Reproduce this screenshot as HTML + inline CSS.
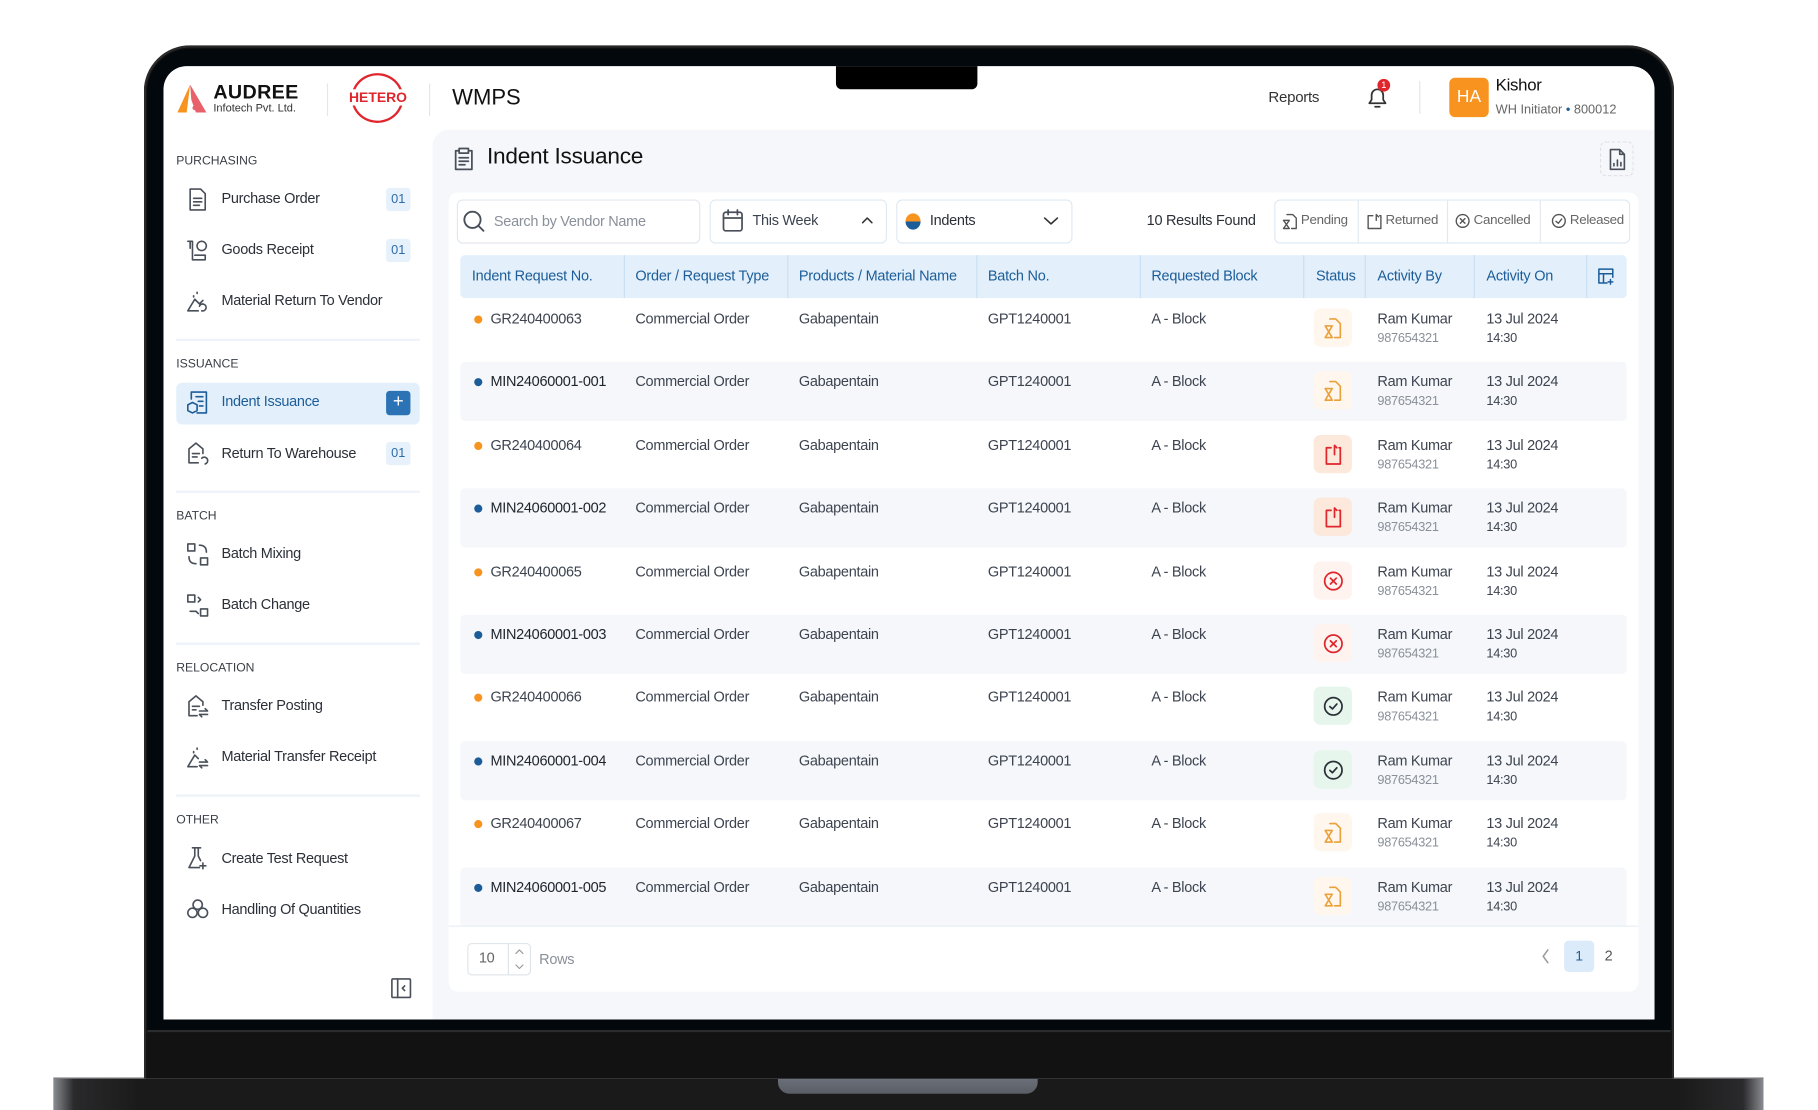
<!DOCTYPE html>
<html><head><meta charset="utf-8">
<style>
*{box-sizing:border-box;margin:0;padding:0}
html,body{width:1818px;height:1110px;overflow:hidden;background:#fff;font-family:"Liberation Sans",sans-serif}
#w{position:absolute;left:0;top:0;width:1568px;height:957px;transform:scale(1.15944,1.15987);transform-origin:0 0}
.a{position:absolute}
.t{position:absolute;white-space:nowrap;font-size:12.5px;letter-spacing:-0.25px;color:#3d4450}
svg{position:absolute;fill:none;stroke-linecap:round;stroke-linejoin:round}
.sh{font-size:10.5px;color:#3a3f47;letter-spacing:0}
.si{font-size:12.5px;color:#2b3038}
.badge{position:absolute;left:333px;width:21px;height:20px;background:#e6f1fb;border-radius:3px;font-size:11px;color:#2d6ca8;text-align:center;line-height:20px}
.div{position:absolute;left:152px;width:210px;height:2px;background:#edf3f9}
.hd{font-size:12.5px;color:#1c5d99;letter-spacing:-0.2px}
.row{position:absolute;left:397px;width:1006px;height:51px;border-radius:4px}
.row.s{background:#f5f7fa}
.dot{position:absolute;width:7px;height:7px;border-radius:50%;left:12px;top:14px}
.st{position:absolute;left:736px;top:8px;width:33px;height:33px;border-radius:6px}
</style></head><body>
<div id="w">
<!-- base -->
<div class="a" style="left:46px;top:929px;width:1475px;height:28px;background:linear-gradient(90deg,#8a8d92 0,#2a2a2c 1.2%,#1a1a1a 5%,#1a1a1a 95%,#2a2a2c 98.8%,#8a8d92 100%);border-top:1px solid #6a6a6e"></div>
<div class="a" style="left:671px;top:929px;width:224px;height:14px;background:linear-gradient(#6b707a,#5a5e66);border-radius:0 0 10px 10px"></div>
<!-- bezel -->
<div class="a" style="left:124px;top:39px;width:1320px;height:891px;background:#121212;border-radius:40px 40px 0 0;border:2px solid #2a2a2a;border-bottom:none"></div>
<div class="a" style="left:127px;top:42px;width:1314px;height:848px;background:#03080d;border-radius:37px 37px 0 0;border-bottom:2px solid #2a2c2e"></div>
<!-- screen -->
<div class="a" style="left:141px;top:57px;width:1286px;height:822px;background:#fff;border-radius:20px 20px 0 0;overflow:hidden">
</div>
<div class="a" style="left:373px;top:112px;width:1054px;height:767px;background:#f5f7fa;border-radius:14px 0 0 0"></div>
<div class="a" style="left:721px;top:57px;width:122px;height:20px;background:#000;border-radius:0 0 5px 5px"></div>

<!-- header -->
<svg style="left:152px;top:72px" width="28" height="26" viewBox="0 0 28 26"><path d="M12 1 L1 25 H9 Z" fill="#f7931e" stroke="none"/><path d="M12 1 L26 25 H17 L13 14 Z" fill="#e8606a" stroke="none"/><circle cx="16" cy="21" r="2" fill="#e8606a" stroke="none"/></svg>
<div class="t" style="left:184px;top:70px;font-size:17px;font-weight:bold;color:#111;letter-spacing:0.3px">AUDREE</div>
<div class="t" style="left:184px;top:88px;font-size:9.5px;color:#333;letter-spacing:0">Infotech Pvt. Ltd.</div>
<div class="a" style="left:282px;top:72px;width:1px;height:28px;background:#e6e6e6"></div>
<div class="a" style="left:303px;top:63px;width:45px;height:43px;border:2px solid #e0262d;border-radius:50%"></div>
<div class="t" style="left:300px;top:77px;font-size:12px;font-weight:bold;color:#e0262d;background:#fff;letter-spacing:0;padding:0 1px">HETERO</div>
<div class="a" style="left:370px;top:72px;width:1px;height:28px;background:#e6e6e6"></div>
<div class="t" style="left:390px;top:74px;font-size:19px;color:#111;letter-spacing:0">WMPS</div>
<div class="t" style="left:1094px;top:76px;font-size:13px;color:#333">Reports</div>
<svg style="left:1178px;top:73px" width="20" height="22" viewBox="0 0 20 22" stroke="#333" stroke-width="1.5"><path d="M3 16 H17 L15 13 V9 A5 5 0 0 0 5 9 V13 Z M8 19 H12"/></svg>
<div class="a" style="left:1188px;top:68px;width:11px;height:11px;border-radius:50%;background:#e0262d;color:#fff;font-size:8px;text-align:center;line-height:11px">1</div>
<div class="a" style="left:1224px;top:70px;width:1px;height:28px;background:#e6e6e6"></div>
<div class="a" style="left:1250px;top:67px;width:34px;height:34px;border-radius:5px;background:#f7931e;color:#fff;font-size:15px;text-align:center;line-height:34px">HA</div>
<div class="t" style="left:1290px;top:66px;font-size:14.5px;color:#111">Kishor</div>
<div class="t" style="left:1290px;top:89px;font-size:11px;color:#666;letter-spacing:0">WH Initiator <span style="color:#1c5d99">•</span> 800012</div>

<!-- sidebar -->
<div class="t sh" style="left:152px;top:133px">PURCHASING</div>
<div class="t sh" style="left:152px;top:308px">ISSUANCE</div>
<div class="t sh" style="left:152px;top:439px">BATCH</div>
<div class="t sh" style="left:152px;top:570px">RELOCATION</div>
<div class="t sh" style="left:152px;top:701px">OTHER</div>
<div class="div" style="top:292px"></div><div class="div" style="top:423px"></div><div class="div" style="top:554px"></div><div class="div" style="top:685px"></div>
<div class="a" style="left:152px;top:330px;width:210px;height:36px;background:#e3f0fb;border-radius:5px"></div>
<svg style="left:161px;top:162px" width="19" height="20" viewBox="0 0 19 20" stroke="#4a505a" stroke-width="1.4"><path d="M3 1 H12 L16 5 V19 H3 Z M6 9 H13 M6 12 H13 M6 15 H11"/></svg>
<div class="t si" style="left:191px;top:164px">Purchase Order</div><div class="badge" style="top:162px">01</div>
<svg style="left:161px;top:206px" width="19" height="20" viewBox="0 0 19 20" stroke="#4a505a" stroke-width="1.4"><path d="M1 2 H5 V18 H16 M3 2 V8 M13 2 A4 4 0 1 1 12.9 2 M7 14 H16 V18"/></svg>
<div class="t si" style="left:191px;top:208px">Goods Receipt</div><div class="badge" style="top:206px">01</div>
<svg style="left:161px;top:250px" width="19" height="20" viewBox="0 0 19 20" stroke="#4a505a" stroke-width="1.4"><path d="M1 18 L7 8 L11 12 L14 9 M1 18 H10 M13 18 A3 3 0 1 0 11 14 M9 2 V3 M6 5 V6"/></svg>
<div class="t si" style="left:191px;top:252px">Material Return To Vendor</div>
<svg style="left:161px;top:337px" width="19" height="20" viewBox="0 0 19 20" stroke="#1c5d99" stroke-width="1.4"><path d="M4 7 V1 H17 V19 H9 M8 5 H14 M10 9 H14 M11 13 H14 M1 12 L5 10 L9 12 V17 L5 19 L1 17 Z"/></svg>
<div class="t si" style="left:191px;top:339px;color:#1c5d99">Indent Issuance</div>
<div class="a" style="left:333px;top:337px;width:21px;height:21px;background:#2b73b4;border-radius:3px;color:#fff;text-align:center;line-height:20px;font-size:16px">+</div>
<svg style="left:161px;top:381px" width="19" height="20" viewBox="0 0 19 20" stroke="#4a505a" stroke-width="1.4"><path d="M10 18 H2 V6 L8 1 L14 6 V10 M5 10 H11 M5 13 H9 M16 19 A3 3 0 1 0 13 14"/></svg>
<div class="t si" style="left:191px;top:384px">Return To Warehouse</div><div class="badge" style="top:381px">01</div>
<svg style="left:161px;top:468px" width="19" height="20" viewBox="0 0 19 20" stroke="#4a505a" stroke-width="1.4"><path d="M1 1 H7 V7 H1 Z M12 13 H18 V19 H12 Z M11 2 Q17 2 17 8 M8 18 Q2 18 2 12"/></svg>
<div class="t si" style="left:191px;top:470px">Batch Mixing</div>
<svg style="left:161px;top:512px" width="19" height="20" viewBox="0 0 19 20" stroke="#4a505a" stroke-width="1.4"><path d="M1 1 H7 V7 H1 Z M12 13 H18 V19 H12 Z M10 3 L12 5 M10 17 L8 15 M12 5 L10 7 M3 15 H8"/></svg>
<div class="t si" style="left:191px;top:514px">Batch Change</div>
<svg style="left:161px;top:599px" width="19" height="20" viewBox="0 0 19 20" stroke="#4a505a" stroke-width="1.4"><path d="M9 18 H2 V6 L8 1 L14 6 V9 M5 10 H11 M5 13 H8 M11 14 H18 L16 12 M18 17 H11 L13 19"/></svg>
<div class="t si" style="left:191px;top:601px">Transfer Posting</div>
<svg style="left:161px;top:643px" width="19" height="20" viewBox="0 0 19 20" stroke="#4a505a" stroke-width="1.4"><path d="M1 18 L7 8 L10 11 M1 18 H9 M11 14 H18 L16 12 M18 17 H11 L13 19 M9 2 V3 M6 5 V6"/></svg>
<div class="t si" style="left:191px;top:645px">Material Transfer Receipt</div>
<svg style="left:161px;top:730px" width="19" height="20" viewBox="0 0 19 20" stroke="#4a505a" stroke-width="1.4"><path d="M5 1 H12 M7 1 V8 L2 18 H11 M10 1 V8 L12 12 M14 14 V19 M11.5 16.5 H16.5"/></svg>
<div class="t si" style="left:191px;top:733px">Create Test Request</div>
<svg style="left:161px;top:774px" width="19" height="20" viewBox="0 0 19 20" stroke="#4a505a" stroke-width="1.4"><circle cx="9.5" cy="6" r="4"/><circle cx="5" cy="13" r="4"/><circle cx="14" cy="13" r="4"/></svg>
<div class="t si" style="left:191px;top:777px">Handling Of Quantities</div>
<svg style="left:337px;top:843px" width="18" height="18" viewBox="0 0 18 18" stroke="#4a505a" stroke-width="1.4"><rect x="1" y="1" width="16" height="16" rx="1"/><path d="M6 1 V17 M12 7 L10 9 L12 11"/></svg>

<!-- title -->
<svg style="left:391px;top:127px" width="18" height="20" viewBox="0 0 18 20" stroke="#4a505a" stroke-width="1.5"><path d="M5 3 H2 V19 H16 V3 H13 M5 1 H13 V5 H5 Z M5 9 H13 M5 12 H13 M5 15 H10"/></svg>
<div class="t" style="left:420px;top:124px;font-size:19.5px;color:#111;letter-spacing:-0.2px">Indent Issuance</div>
<div class="a" style="left:1380px;top:122px;width:29px;height:30px;border:1px dashed #dde2e8;border-radius:5px"></div>
<svg style="left:1386px;top:128px" width="18" height="19" viewBox="0 0 18 19" stroke="#4a505a" stroke-width="1.4"><path d="M3 1 H11 L15 5 V18 H3 Z M11 1 V5 H15 M6 15 V13 M9 15 V10 M12 15 V12"/></svg>

<!-- card -->
<div class="a" style="left:387px;top:166px;width:1026px;height:689px;background:#fff;border-radius:8px"></div>
<div class="a" style="left:394px;top:172px;width:210px;height:38px;border:1px solid #e3e8ee;border-radius:5px"></div>
<svg style="left:399px;top:181px" width="20" height="20" viewBox="0 0 20 20" stroke="#4a505a" stroke-width="1.6"><circle cx="8.5" cy="8.5" r="7"/><path d="M13.5 13.5 L18 18"/></svg>
<div class="t" style="left:426px;top:184px;color:#8a9099">Search by Vendor Name</div>
<div class="a" style="left:612px;top:172px;width:153px;height:38px;border:1px solid #dfe9f3;border-radius:5px"></div>
<svg style="left:623px;top:180px" width="18" height="20" viewBox="0 0 18 20" stroke="#4a505a" stroke-width="1.5"><rect x="1" y="3" width="16" height="16" rx="2"/><path d="M1 8 H17 M5 1 V5 M13 1 V5"/></svg>
<div class="t" style="left:649px;top:183px;color:#3d4450">This Week</div>
<svg style="left:743px;top:186px" width="10" height="8" viewBox="0 0 10 8" stroke="#333" stroke-width="1.3"><path d="M1 6 L5 2 L9 6"/></svg>
<div class="a" style="left:773px;top:172px;width:152px;height:38px;border:1px solid #dfe9f3;border-radius:5px"></div>
<div class="a" style="left:781px;top:184px;width:13px;height:14px;border-radius:50%;background:linear-gradient(#f7931e 50%,#1c5d99 50%)"></div>
<div class="t" style="left:802px;top:183px;color:#2b3038">Indents</div>
<svg style="left:900px;top:186px" width="13" height="9" viewBox="0 0 13 9" stroke="#333" stroke-width="1.4"><path d="M1 2 L6.5 7 L12 2"/></svg>
<div class="t" style="left:989px;top:183px;color:#2b3038">10 Results Found</div>
<div class="a" style="left:1099px;top:172px;width:307px;height:38px;border:1px solid #dfe9f3;border-radius:5px"></div>
<div class="a" style="left:1171px;top:173px;width:1px;height:36px;background:#e3e8ee"></div>
<div class="a" style="left:1248px;top:173px;width:1px;height:36px;background:#e3e8ee"></div>
<div class="a" style="left:1328px;top:173px;width:1px;height:36px;background:#e3e8ee"></div>
<svg style="left:1106px;top:184px" width="13" height="14" viewBox="0 0 13 14" stroke="#555" stroke-width="1.2"><path d="M4 1 H9 L12 4 V13 H8 M1 6 H6 L1 13 H6 Z"/></svg>
<div class="t" style="left:1122px;top:184px;font-size:11.5px;color:#666">Pending</div>
<svg style="left:1179px;top:184px" width="13" height="14" viewBox="0 0 13 14" stroke="#555" stroke-width="1.2"><path d="M5 2 H1 V13 H12 V2 H11 M8 6 V1 L10 3"/></svg>
<div class="t" style="left:1195px;top:184px;font-size:11.5px;color:#666">Returned</div>
<svg style="left:1255px;top:184px" width="13" height="13" viewBox="0 0 13 13" stroke="#555" stroke-width="1.2"><circle cx="6.5" cy="6.5" r="5.5"/><path d="M4.5 4.5 L8.5 8.5 M8.5 4.5 L4.5 8.5"/></svg>
<div class="t" style="left:1271px;top:184px;font-size:11.5px;color:#666">Cancelled</div>
<svg style="left:1338px;top:184px" width="13" height="13" viewBox="0 0 13 13" stroke="#555" stroke-width="1.2"><circle cx="6.5" cy="6.5" r="5.5"/><path d="M4 6.8 L6 8.5 L9 4.8"/></svg>
<div class="t" style="left:1354px;top:184px;font-size:11.5px;color:#666">Released</div>

<!-- table head -->
<div class="a" style="left:397px;top:220px;width:1006px;height:37px;background:#e3f0fb;border-radius:4px"></div>
<div class="a" style="left:538px;top:220px;width:1px;height:37px;background:#c9dff2"></div>
<div class="a" style="left:679px;top:220px;width:1px;height:37px;background:#c9dff2"></div>
<div class="a" style="left:842px;top:220px;width:1px;height:37px;background:#c9dff2"></div>
<div class="a" style="left:983px;top:220px;width:1px;height:37px;background:#c9dff2"></div>
<div class="a" style="left:1124px;top:220px;width:1px;height:37px;background:#c9dff2"></div>
<div class="a" style="left:1177px;top:220px;width:1px;height:37px;background:#c9dff2"></div>
<div class="a" style="left:1271px;top:220px;width:1px;height:37px;background:#c9dff2"></div>
<div class="a" style="left:1368px;top:220px;width:1px;height:37px;background:#c9dff2"></div>
<div class="t hd" style="left:407px;top:231px">Indent Request No.</div>
<div class="t hd" style="left:548px;top:231px">Order / Request Type</div>
<div class="t hd" style="left:689px;top:231px">Products / Material Name</div>
<div class="t hd" style="left:852px;top:231px">Batch No.</div>
<div class="t hd" style="left:993px;top:231px">Requested Block</div>
<div class="t hd" style="left:1135px;top:231px">Status</div>
<div class="t hd" style="left:1188px;top:231px">Activity By</div>
<div class="t hd" style="left:1282px;top:231px">Activity On</div>
<svg style="left:1378px;top:231px" width="14" height="15" viewBox="0 0 14 15" stroke="#1c5d99" stroke-width="1.3"><path d="M8 13 H1 V1 H13 V8 M1 5 H13 M5 5 V13 M11 10 V14 M9 12 H13"/></svg>

<!-- rows -->
<div id="rows"></div>
<div class="row" style="top:258px"><div class="dot" style="background:#f7931e"></div><div class="t" style="left:26px;top:10px">GR240400063</div><div class="t" style="left:151px;top:10px">Commercial Order</div><div class="t" style="left:292px;top:10px">Gabapentain</div><div class="t" style="left:455px;top:10px">GPT1240001</div><div class="t" style="left:596px;top:10px">A - Block</div><div class="st" style="background:#fff6ee"><svg style="left:9px;top:8px" width="16" height="18" viewBox="0 0 16 18" stroke="#e9a13b" stroke-width="1.4"><path d="M5 1 H10 L14 5 V17 H9 M1 7 H7 L1 17 H7 Z"/></svg></div><div class="t" style="left:791px;top:10px">Ram Kumar</div><div class="t" style="left:791px;top:28px;font-size:11px;color:#8a9099">987654321</div><div class="t" style="left:885px;top:10px">13 Jul 2024</div><div class="t" style="left:885px;top:28px;font-size:11px;color:#3d4450">14:30</div></div>
<div class="row s" style="top:312.4px"><div class="dot" style="background:#1c5d99"></div><div class="t" style="left:26px;top:10px;color:#1f242c">MIN24060001-001</div><div class="t" style="left:151px;top:10px">Commercial Order</div><div class="t" style="left:292px;top:10px">Gabapentain</div><div class="t" style="left:455px;top:10px">GPT1240001</div><div class="t" style="left:596px;top:10px">A - Block</div><div class="st" style="background:#fff6ee"><svg style="left:9px;top:8px" width="16" height="18" viewBox="0 0 16 18" stroke="#e9a13b" stroke-width="1.4"><path d="M5 1 H10 L14 5 V17 H9 M1 7 H7 L1 17 H7 Z"/></svg></div><div class="t" style="left:791px;top:10px">Ram Kumar</div><div class="t" style="left:791px;top:28px;font-size:11px;color:#8a9099">987654321</div><div class="t" style="left:885px;top:10px">13 Jul 2024</div><div class="t" style="left:885px;top:28px;font-size:11px;color:#3d4450">14:30</div></div>
<div class="row" style="top:366.8px"><div class="dot" style="background:#f7931e"></div><div class="t" style="left:26px;top:10px">GR240400064</div><div class="t" style="left:151px;top:10px">Commercial Order</div><div class="t" style="left:292px;top:10px">Gabapentain</div><div class="t" style="left:455px;top:10px">GPT1240001</div><div class="t" style="left:596px;top:10px">A - Block</div><div class="st" style="background:#fde9dc"><svg style="left:9px;top:8px" width="16" height="18" viewBox="0 0 16 18" stroke="#e0262d" stroke-width="1.5"><path d="M6 3 H2 V17 H14 V3 H13 M9 9 V1 L11 3"/></svg></div><div class="t" style="left:791px;top:10px">Ram Kumar</div><div class="t" style="left:791px;top:28px;font-size:11px;color:#8a9099">987654321</div><div class="t" style="left:885px;top:10px">13 Jul 2024</div><div class="t" style="left:885px;top:28px;font-size:11px;color:#3d4450">14:30</div></div>
<div class="row s" style="top:421.2px"><div class="dot" style="background:#1c5d99"></div><div class="t" style="left:26px;top:10px;color:#1f242c">MIN24060001-002</div><div class="t" style="left:151px;top:10px">Commercial Order</div><div class="t" style="left:292px;top:10px">Gabapentain</div><div class="t" style="left:455px;top:10px">GPT1240001</div><div class="t" style="left:596px;top:10px">A - Block</div><div class="st" style="background:#fde9dc"><svg style="left:9px;top:8px" width="16" height="18" viewBox="0 0 16 18" stroke="#e0262d" stroke-width="1.5"><path d="M6 3 H2 V17 H14 V3 H13 M9 9 V1 L11 3"/></svg></div><div class="t" style="left:791px;top:10px">Ram Kumar</div><div class="t" style="left:791px;top:28px;font-size:11px;color:#8a9099">987654321</div><div class="t" style="left:885px;top:10px">13 Jul 2024</div><div class="t" style="left:885px;top:28px;font-size:11px;color:#3d4450">14:30</div></div>
<div class="row" style="top:475.6px"><div class="dot" style="background:#f7931e"></div><div class="t" style="left:26px;top:10px">GR240400065</div><div class="t" style="left:151px;top:10px">Commercial Order</div><div class="t" style="left:292px;top:10px">Gabapentain</div><div class="t" style="left:455px;top:10px">GPT1240001</div><div class="t" style="left:596px;top:10px">A - Block</div><div class="st" style="background:#fff3f0"><svg style="left:8px;top:8px" width="18" height="18" viewBox="0 0 18 18" stroke="#e0262d" stroke-width="1.5"><circle cx="9" cy="9" r="7.5"/><path d="M6.5 6.5 L11.5 11.5 M11.5 6.5 L6.5 11.5"/></svg></div><div class="t" style="left:791px;top:10px">Ram Kumar</div><div class="t" style="left:791px;top:28px;font-size:11px;color:#8a9099">987654321</div><div class="t" style="left:885px;top:10px">13 Jul 2024</div><div class="t" style="left:885px;top:28px;font-size:11px;color:#3d4450">14:30</div></div>
<div class="row s" style="top:530px"><div class="dot" style="background:#1c5d99"></div><div class="t" style="left:26px;top:10px;color:#1f242c">MIN24060001-003</div><div class="t" style="left:151px;top:10px">Commercial Order</div><div class="t" style="left:292px;top:10px">Gabapentain</div><div class="t" style="left:455px;top:10px">GPT1240001</div><div class="t" style="left:596px;top:10px">A - Block</div><div class="st" style="background:#fff3f0"><svg style="left:8px;top:8px" width="18" height="18" viewBox="0 0 18 18" stroke="#e0262d" stroke-width="1.5"><circle cx="9" cy="9" r="7.5"/><path d="M6.5 6.5 L11.5 11.5 M11.5 6.5 L6.5 11.5"/></svg></div><div class="t" style="left:791px;top:10px">Ram Kumar</div><div class="t" style="left:791px;top:28px;font-size:11px;color:#8a9099">987654321</div><div class="t" style="left:885px;top:10px">13 Jul 2024</div><div class="t" style="left:885px;top:28px;font-size:11px;color:#3d4450">14:30</div></div>
<div class="row" style="top:584.4px"><div class="dot" style="background:#f7931e"></div><div class="t" style="left:26px;top:10px">GR240400066</div><div class="t" style="left:151px;top:10px">Commercial Order</div><div class="t" style="left:292px;top:10px">Gabapentain</div><div class="t" style="left:455px;top:10px">GPT1240001</div><div class="t" style="left:596px;top:10px">A - Block</div><div class="st" style="background:#e6f6ec"><svg style="left:8px;top:8px" width="18" height="18" viewBox="0 0 18 18" stroke="#2b3038" stroke-width="1.5"><circle cx="9" cy="9" r="7.5"/><path d="M6 9.2 L8.2 11.2 L12 7"/></svg></div><div class="t" style="left:791px;top:10px">Ram Kumar</div><div class="t" style="left:791px;top:28px;font-size:11px;color:#8a9099">987654321</div><div class="t" style="left:885px;top:10px">13 Jul 2024</div><div class="t" style="left:885px;top:28px;font-size:11px;color:#3d4450">14:30</div></div>
<div class="row s" style="top:638.8px"><div class="dot" style="background:#1c5d99"></div><div class="t" style="left:26px;top:10px;color:#1f242c">MIN24060001-004</div><div class="t" style="left:151px;top:10px">Commercial Order</div><div class="t" style="left:292px;top:10px">Gabapentain</div><div class="t" style="left:455px;top:10px">GPT1240001</div><div class="t" style="left:596px;top:10px">A - Block</div><div class="st" style="background:#e6f6ec"><svg style="left:8px;top:8px" width="18" height="18" viewBox="0 0 18 18" stroke="#2b3038" stroke-width="1.5"><circle cx="9" cy="9" r="7.5"/><path d="M6 9.2 L8.2 11.2 L12 7"/></svg></div><div class="t" style="left:791px;top:10px">Ram Kumar</div><div class="t" style="left:791px;top:28px;font-size:11px;color:#8a9099">987654321</div><div class="t" style="left:885px;top:10px">13 Jul 2024</div><div class="t" style="left:885px;top:28px;font-size:11px;color:#3d4450">14:30</div></div>
<div class="row" style="top:693.2px"><div class="dot" style="background:#f7931e"></div><div class="t" style="left:26px;top:10px">GR240400067</div><div class="t" style="left:151px;top:10px">Commercial Order</div><div class="t" style="left:292px;top:10px">Gabapentain</div><div class="t" style="left:455px;top:10px">GPT1240001</div><div class="t" style="left:596px;top:10px">A - Block</div><div class="st" style="background:#fff6ee"><svg style="left:9px;top:8px" width="16" height="18" viewBox="0 0 16 18" stroke="#e9a13b" stroke-width="1.4"><path d="M5 1 H10 L14 5 V17 H9 M1 7 H7 L1 17 H7 Z"/></svg></div><div class="t" style="left:791px;top:10px">Ram Kumar</div><div class="t" style="left:791px;top:28px;font-size:11px;color:#8a9099">987654321</div><div class="t" style="left:885px;top:10px">13 Jul 2024</div><div class="t" style="left:885px;top:28px;font-size:11px;color:#3d4450">14:30</div></div>
<div class="row s" style="top:747.6px"><div class="dot" style="background:#1c5d99"></div><div class="t" style="left:26px;top:10px;color:#1f242c">MIN24060001-005</div><div class="t" style="left:151px;top:10px">Commercial Order</div><div class="t" style="left:292px;top:10px">Gabapentain</div><div class="t" style="left:455px;top:10px">GPT1240001</div><div class="t" style="left:596px;top:10px">A - Block</div><div class="st" style="background:#fff6ee"><svg style="left:9px;top:8px" width="16" height="18" viewBox="0 0 16 18" stroke="#e9a13b" stroke-width="1.4"><path d="M5 1 H10 L14 5 V17 H9 M1 7 H7 L1 17 H7 Z"/></svg></div><div class="t" style="left:791px;top:10px">Ram Kumar</div><div class="t" style="left:791px;top:28px;font-size:11px;color:#8a9099">987654321</div><div class="t" style="left:885px;top:10px">13 Jul 2024</div><div class="t" style="left:885px;top:28px;font-size:11px;color:#3d4450">14:30</div></div>

<!-- footer -->
<div class="a" style="left:387px;top:798px;width:1026px;height:1px;background:#e6eef6"></div>
<div class="a" style="left:403px;top:813px;width:55px;height:28px;border:1px solid #e0e5ea;border-radius:4px"></div>
<div class="a" style="left:438px;top:813px;width:1px;height:28px;background:#e0e5ea"></div>
<div class="t" style="left:413px;top:819px;color:#666">10</div>
<svg style="left:443px;top:815px" width="10" height="24" viewBox="0 0 10 24" stroke="#999" stroke-width="1"><path d="M2 7 L5 4 L8 7 M2 17 L5 20 L8 17"/></svg>
<div class="t" style="left:465px;top:820px;color:#8a9099">Rows</div>
<svg style="left:1329px;top:818px" width="8" height="13" viewBox="0 0 8 13" stroke="#999" stroke-width="1.3"><path d="M6 1 L2 6.5 L6 12"/></svg>
<div class="a" style="left:1349px;top:811px;width:26px;height:27px;background:#dcebf9;border-radius:4px;color:#1c5d99;font-size:12px;text-align:center;line-height:27px">1</div>
<div class="t" style="left:1384px;top:817px;color:#555">2</div>
</div>
</body></html>
